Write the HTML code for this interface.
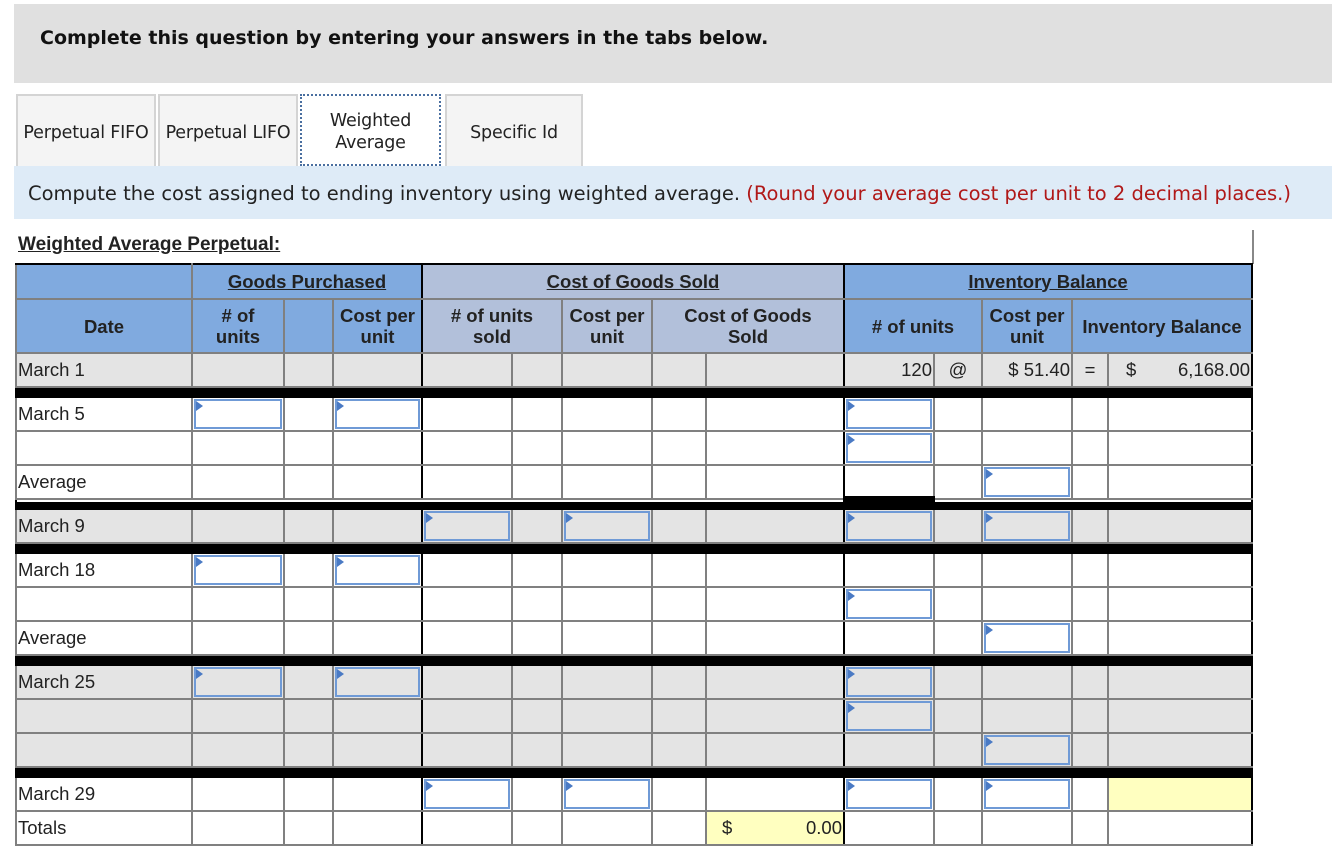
<!DOCTYPE html>
<html><head><meta charset="utf-8"><style>
*{box-sizing:border-box;margin:0;padding:0}
body{width:1332px;height:844px;background:#fff;position:relative;font-family:"Liberation Sans",Arial,sans-serif;color:#222;overflow:hidden}
.top{position:absolute;left:14px;top:4px;width:1318px;height:79px;background:#e0e0e0}
.top b{position:absolute;left:26px;top:23px;font:bold 19px "DejaVu Sans",Verdana,sans-serif;color:#111}
.tab{position:absolute;top:94px;height:72px;background:#f4f4f4;border:2px solid #d4d4d4;border-bottom:none;font:17.5px "DejaVu Sans",Verdana,sans-serif;display:flex;align-items:center;justify-content:center;text-align:center;color:#222;white-space:nowrap;letter-spacing:-0.2px;padding-top:3px}
.tab.sel{background:#fff;border:2px dotted #4a6fa0;border-bottom:2px dotted #4a6fa0;line-height:22px}
.band{position:absolute;left:14px;top:166px;width:1318px;height:53px;background:#deebf7;font:19.5px "DejaVu Sans",Verdana,sans-serif;padding:16px 0 0 14px;color:#222;white-space:nowrap}
.band span{color:#b01818}
.ttl{position:absolute;left:18px;top:234px;font-weight:bold;font-size:19px;text-decoration:underline}
.vline{position:absolute;left:1252px;top:230px;width:2px;height:34px;background:#888}
table{position:absolute;left:15px;top:263px;border-collapse:collapse;table-layout:fixed;font-size:18.5px}
td{border:2px solid #808080;height:34px;padding:0 1px;white-space:nowrap;position:relative;line-height:20px}
.h1 td{background:#80aadf;height:35px;text-align:center;font-weight:bold;border-color:#808080}
.h2 td{background:#80aadf;height:54px;text-align:center;font-weight:bold;line-height:21px}
.h1 td.c,.h2 td.c{background:#b2c0da}
u{text-decoration:underline}
tr.g td{background:#e4e4e4}
tr.sep td{height:10px;background:#000;border-color:#000;padding:0}
.bl{border-left:2px solid #000!important}
.br{border-right:2px solid #000!important}
.in{position:absolute;left:1px;top:1px;right:1px;bottom:1px;border:2px solid #6f9ad6;background:inherit}
tr.g .in{background:#e4e4e4}
.in:before{content:"";position:absolute;left:0;top:0;border-top:5px solid transparent;border-bottom:5px solid transparent;border-left:7px solid #4a7ac4}
.y{background:#ffffc0!important}
.r{text-align:right}
</style></head><body>
<div class="top"><b>Complete this question by entering your answers in the tabs below.</b></div>
<div class="tab" style="left:16px;width:140px">Perpetual FIFO</div>
<div class="tab" style="left:158px;width:140px">Perpetual LIFO</div>
<div class="tab sel" style="left:300px;width:141px">Weighted<br>Average</div>
<div class="tab" style="left:445px;width:138px">Specific Id</div>
<div class="band">Compute the cost assigned to ending inventory using weighted average. <span>(Round your average cost per unit to 2 decimal places.)</span></div>
<div class="ttl">Weighted Average Perpetual:</div>
<div class="vline"></div>
<table>
<colgroup><col style="width:176px"><col style="width:92px"><col style="width:49px"><col style="width:89px"><col style="width:90px"><col style="width:50px"><col style="width:90px"><col style="width:54px"><col style="width:138px"><col style="width:90px"><col style="width:48px"><col style="width:90px"><col style="width:36px"><col style="width:144px"></colgroup>
<tr class="h1"><td style="border-top:2px solid #000"></td><td colspan="3" class="bl br" style="border-top:2px solid #000"><u>Goods Purchased</u></td><td colspan="5" class="c br" style="border-top:2px solid #000"><u>Cost of Goods Sold</u></td><td colspan="5" class="br" style="border-top:2px solid #000"><u>Inventory Balance</u></td></tr>
<tr class="h2"><td>Date</td><td class="bl"># of<br>units</td><td></td><td class="br">Cost per<br>unit</td><td colspan="2" class="c"># of units<br>sold</td><td class="c">Cost per<br>unit</td><td colspan="2" class="c br">Cost of Goods<br>Sold</td><td colspan="2"># of units</td><td>Cost per<br>unit</td><td colspan="2" class="br">Inventory Balance</td></tr>
<tr class="g"><td>March 1</td><td class="bl"></td><td></td><td class="br"></td><td></td><td></td><td></td><td></td><td class="br"></td><td class="r">120</td><td style="text-align:center">@</td><td class="r">$ 51.40</td><td style="text-align:center">=</td><td class="br"><span style="margin-left:16px">$</span><span style="float:right">6,168.00</span></td></tr>
<tr class="sep"><td colspan="14"></td></tr>
<tr><td>March 5</td><td class="bl"><div class="in"></div></td><td></td><td class="br"><div class="in"></div></td><td></td><td></td><td></td><td></td><td class="br"></td><td><div class="in"></div></td><td></td><td></td><td></td><td class="br"></td></tr>
<tr><td></td><td class="bl"></td><td></td><td class="br"></td><td></td><td></td><td></td><td></td><td class="br"></td><td><div class="in"></div></td><td></td><td></td><td></td><td class="br"></td></tr>
<tr><td>Average</td><td class="bl"></td><td></td><td class="br"></td><td></td><td></td><td></td><td></td><td class="br"></td><td style="border-bottom:6px solid #000"></td><td></td><td><div class="in"></div></td><td></td><td class="br"></td></tr>
<tr class="sep"><td colspan="14"></td></tr>
<tr class="g"><td>March 9</td><td class="bl"></td><td></td><td class="br"></td><td><div class="in"></div></td><td></td><td><div class="in"></div></td><td></td><td class="br"></td><td><div class="in"></div></td><td></td><td><div class="in"></div></td><td></td><td class="br"></td></tr>
<tr class="sep"><td colspan="14"></td></tr>
<tr><td>March 18</td><td class="bl"><div class="in"></div></td><td></td><td class="br"><div class="in"></div></td><td></td><td></td><td></td><td></td><td class="br"></td><td></td><td></td><td></td><td></td><td class="br"></td></tr>
<tr><td></td><td class="bl"></td><td></td><td class="br"></td><td></td><td></td><td></td><td></td><td class="br"></td><td><div class="in"></div></td><td></td><td></td><td></td><td class="br"></td></tr>
<tr><td>Average</td><td class="bl"></td><td></td><td class="br"></td><td></td><td></td><td></td><td></td><td class="br"></td><td></td><td></td><td><div class="in"></div></td><td></td><td class="br"></td></tr>
<tr class="sep"><td colspan="14"></td></tr>
<tr class="g"><td>March 25</td><td class="bl"><div class="in"></div></td><td></td><td class="br"><div class="in"></div></td><td></td><td></td><td></td><td></td><td class="br"></td><td><div class="in"></div></td><td></td><td></td><td></td><td class="br"></td></tr>
<tr class="g"><td></td><td class="bl"></td><td></td><td class="br"></td><td></td><td></td><td></td><td></td><td class="br"></td><td><div class="in"></div></td><td></td><td></td><td></td><td class="br"></td></tr>
<tr class="g"><td></td><td class="bl"></td><td></td><td class="br"></td><td></td><td></td><td></td><td></td><td class="br"></td><td></td><td></td><td><div class="in"></div></td><td></td><td class="br"></td></tr>
<tr class="sep"><td colspan="14"></td></tr>
<tr><td>March 29</td><td class="bl"></td><td></td><td class="br"></td><td><div class="in"></div></td><td></td><td><div class="in"></div></td><td></td><td class="br"></td><td><div class="in"></div></td><td></td><td><div class="in"></div></td><td></td><td class="br y"></td></tr>
<tr><td style="height:29px">Totals</td><td class="bl"></td><td></td><td class="br"></td><td></td><td></td><td></td><td></td><td class="br y"><span style="margin-left:14px">$</span><span style="float:right">0.00</span></td><td></td><td></td><td></td><td></td><td class="br"></td></tr>
</table>
</body></html>
